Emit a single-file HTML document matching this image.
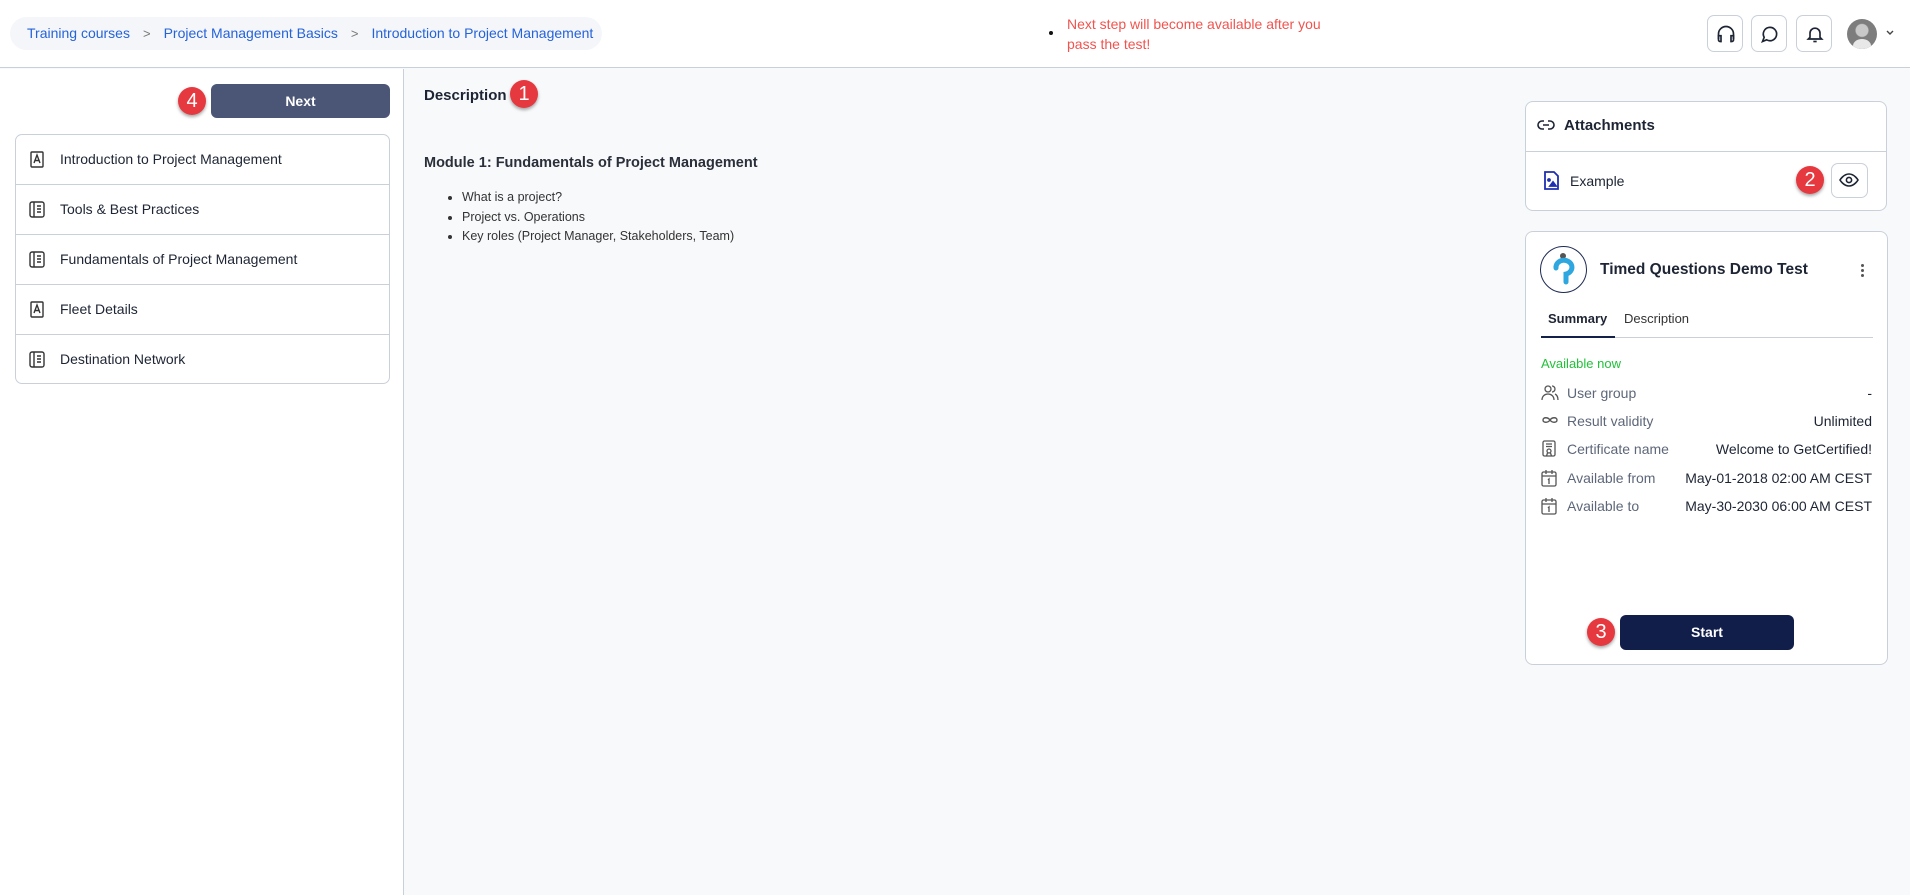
<!DOCTYPE html>
<html><head><meta charset="utf-8"><style>
*{box-sizing:border-box;margin:0;padding:0}
body{width:1910px;height:895px;overflow:hidden;background:#f8f9fb;font-family:"Liberation Sans",sans-serif;color:#1d2433;position:relative}
.abs{position:absolute}
.header{left:0;top:0;width:1910px;height:68px;background:#fff;border-bottom:1px solid #c9d0da}
.crumb{left:10px;top:17px;width:592px;height:33px;background:#f4f6fa;border-radius:17px;font-size:14px;color:#2563d9;line-height:33px;padding-left:17px;white-space:nowrap}
.crumb span.sep{color:#777;margin:0 13px;font-size:13px}
.warn{left:1067px;top:14px;color:#f0544f;font-size:14px;line-height:20px}
.hbtn{top:15px;width:36px;height:37px;border:1px solid #c9d0da;border-radius:7px;background:#fff}
.hbtn svg{position:absolute;left:8px;top:8px}
.side{left:0;top:69px;width:404px;height:826px;background:#fff;border-right:1px solid #c9d0da}
.next{left:211px;top:84px;width:179px;height:34px;background:#4b5575;border-radius:6px;color:#fff;font-weight:bold;font-size:14px;text-align:center;line-height:34px}
.badge{width:28px;height:28px;border-radius:50%;background:#e5393f;color:#fff;font-size:20px;text-align:center;line-height:28px;box-shadow:0 2px 3px rgba(0,0,0,.35)}
.list{left:15px;top:134px;width:375px;height:250px;border:1px solid #c9d0da;border-radius:7px;background:#fff;overflow:hidden}
.row{height:50px;border-bottom:1px solid #c9d0da;position:relative;font-size:14px;line-height:49px;padding-left:44px}
.row:last-child{border-bottom:none}
.row svg{position:absolute;left:13px;top:16px}
.card{border:1px solid #c9d0da;border-radius:8px;background:#fff}
.lab{left:1567px;font-size:14px;color:#5d6779}
.val{right:38px;font-size:14px;color:#1d2433;text-align:right}
.ic{left:1541px}
</style></head><body>
<div class="abs header"></div>
<div class="abs crumb">Training courses<span class="sep">&gt;</span>Project Management Basics<span class="sep">&gt;</span>Introduction to Project Management</div>
<div class="abs" style="left:1049px;top:31px;width:4px;height:4px;border-radius:50%;background:#111"></div>
<div class="abs warn">Next step will become available after you<br>pass the test!</div>
<div class="abs hbtn" style="left:1707px"><svg width="20" height="20" viewBox="0 0 24 24" fill="none" stroke="#1d2433" stroke-width="2"><path d="M3 18v-6a9 9 0 0 1 18 0v6"/><path d="M21 19a2 2 0 0 1-2 2h-1v-7h3zM3 19a2 2 0 0 0 2 2h1v-7H3z"/></svg></div>
<div class="abs hbtn" style="left:1751px"><svg width="20" height="20" viewBox="0 0 24 24" fill="none" stroke="#1d2433" stroke-width="2"><path d="M3 21l2-5a8 8 0 1 1 3 3z"/></svg></div>
<div class="abs hbtn" style="left:1796px"><svg width="20" height="20" viewBox="0 0 24 24" fill="none" stroke="#1d2433" stroke-width="2"><path d="M6 16V11a6 6 0 0 1 12 0v5l2 2H4z"/><path d="M10 21h4"/></svg></div>
<div class="abs" style="left:1847px;top:19px;width:30px;height:30px;border-radius:50%;background:radial-gradient(circle at 50% 38%,#c8c8c8 0 6px,#7d7d7d 7px);overflow:hidden"><div style="position:absolute;left:6px;top:20px;width:18px;height:14px;border-radius:50%;background:#e8e8e8"></div></div>
<svg class="abs" style="left:1885px;top:29px" width="10" height="8" viewBox="0 0 10 8"><path d="M2 2l3 3 3-3" stroke="#444" stroke-width="1.4" fill="none"/></svg>

<div class="abs side"></div>
<div class="abs next">Next</div>
<div class="abs badge" style="left:178px;top:87px">4</div>
<div class="abs list">
<div class="row"><svg width="16" height="18" viewBox="0 0 16 18" fill="none" stroke="#333" stroke-width="1.4"><rect x="2" y="1" width="12" height="15" rx="1"/><path d="M5 12l3-8 3 8M6 9.5h4"/></svg>Introduction to Project Management</div>
<div class="row"><svg width="16" height="18" viewBox="0 0 16 18" fill="none" stroke="#333" stroke-width="1.4"><rect x="1" y="1" width="14" height="15" rx="2"/><path d="M5 1v15M8 5h4M8 8h4M8 11h4"/></svg>Tools &amp; Best Practices</div>
<div class="row"><svg width="16" height="18" viewBox="0 0 16 18" fill="none" stroke="#333" stroke-width="1.4"><rect x="1" y="1" width="14" height="15" rx="2"/><path d="M5 1v15M8 5h4M8 8h4M8 11h4"/></svg>Fundamentals of Project Management</div>
<div class="row"><svg width="16" height="18" viewBox="0 0 16 18" fill="none" stroke="#333" stroke-width="1.4"><rect x="2" y="1" width="12" height="15" rx="1"/><path d="M5 12l3-8 3 8M6 9.5h4"/></svg>Fleet Details</div>
<div class="row"><svg width="16" height="18" viewBox="0 0 16 18" fill="none" stroke="#333" stroke-width="1.4"><rect x="1" y="1" width="14" height="15" rx="2"/><path d="M5 1v15M8 5h4M8 8h4M8 11h4"/></svg>Destination Network</div>
</div>

<div class="abs" style="left:424px;top:87px;font-weight:bold;font-size:15px">Description</div>
<div class="abs badge" style="left:510px;top:80px">1</div>
<div class="abs" style="left:424px;top:155px;font-weight:bold;font-size:14.5px;color:#2a2f3a">Module 1: Fundamentals of Project Management</div>
<ul class="abs" style="left:462px;top:188px;font-size:12.5px;line-height:19.5px;color:#333">
<li>What is a project?</li><li>Project vs. Operations</li><li>Key roles (Project Manager, Stakeholders, Team)</li></ul>

<div class="abs card" style="left:1525px;top:101px;width:362px;height:110px"></div>
<div class="abs" style="left:1525px;top:151px;width:362px;height:1px;background:#c9d0da"></div>
<svg class="abs" style="left:1537px;top:118px" width="18" height="14" viewBox="0 0 18 14" fill="none" stroke="#1d2433" stroke-width="1.6"><path d="M7 3H5a4 4 0 0 0 0 8h2M11 3h2a4 4 0 0 1 0 8h-2M6 7h6"/></svg>
<div class="abs" style="left:1564px;top:117px;font-weight:bold;font-size:15px">Attachments</div>
<svg class="abs" style="left:1543px;top:170px" width="17" height="21" viewBox="0 0 17 21" fill="none" stroke="#1f2fb0" stroke-width="1.8"><path d="M2 2h9l4 4v13H2z"/><circle cx="6" cy="10" r="1" fill="#1f2fb0"/><path d="M7 16l3-4 3 4z" fill="#1f2fb0"/></svg>
<div class="abs" style="left:1570px;top:173px;font-size:14px">Example</div>
<div class="abs badge" style="left:1796px;top:166px">2</div>
<div class="abs" style="left:1831px;top:163px;width:37px;height:35px;border:1px solid #c9d0da;border-radius:7px;background:#fff"></div>
<svg class="abs" style="left:1839px;top:172px" width="20" height="16" viewBox="0 0 20 16" fill="none" stroke="#1d2433" stroke-width="1.6"><path d="M1 8s3.5-6 9-6 9 6 9 6-3.5 6-9 6-9-6-9-6z"/><circle cx="10" cy="8" r="2.6"/></svg>

<div class="abs card" style="left:1525px;top:231px;width:363px;height:434px"></div>
<div class="abs" style="left:1540px;top:246px;width:47px;height:47px;border:1.5px solid #1d2a55;border-radius:50%"></div>
<svg class="abs" style="left:1552px;top:252px" width="24" height="36" viewBox="0 0 24 36"><circle cx="11" cy="4" r="3" fill="#555"/><path d="M4 16a8 7 0 1 1 10 6v8" stroke="#2ea6e0" stroke-width="5" fill="none" stroke-linecap="round"/></svg>
<div class="abs" style="left:1600px;top:261px;font-weight:bold;font-size:15.5px">Timed Questions Demo Test</div>
<div class="abs" style="left:1861px;top:264px;width:3px;height:3px;border-radius:50%;background:#555;box-shadow:0 5px 0 #555,0 10px 0 #555"></div>
<div class="abs" style="left:1548px;top:311px;font-weight:bold;font-size:13px">Summary</div>
<div class="abs" style="left:1624px;top:311px;font-size:13px;color:#333">Description</div>
<div class="abs" style="left:1541px;top:337px;width:332px;height:1px;background:#c9d0da"></div>
<div class="abs" style="left:1541px;top:336px;width:74px;height:2px;background:#12204a"></div>
<div class="abs" style="left:1541px;top:356px;font-size:13px;color:#22c13a">Available now</div>

<svg class="abs ic" style="top:384px" width="18" height="18" viewBox="0 0 18 18" fill="none" stroke="#555" stroke-width="1.3"><circle cx="7" cy="5" r="3"/><path d="M1 16c0-4 3-6 6-6s6 2 6 6M11 2a3 3 0 0 1 0 6M14 10c2 1 3 3 3 6"/></svg>
<div class="abs lab" style="top:385px">User group</div><div class="abs val" style="top:385px">-</div>
<svg class="abs ic" style="top:414px" width="18" height="12" viewBox="0 0 18 12" fill="none" stroke="#555" stroke-width="1.4"><path d="M9 6c-2-3-7-3-7 0s5 3 7 0 7-3 7 0-5 3-7 0z"/></svg>
<div class="abs lab" style="top:413px">Result validity</div><div class="abs val" style="top:413px">Unlimited</div>
<svg class="abs ic" style="top:440px" width="16" height="18" viewBox="0 0 16 18" fill="none" stroke="#555" stroke-width="1.3"><rect x="2" y="1" width="12" height="15" rx="1.5"/><path d="M5 4h6M5 6.5h6"/><circle cx="8" cy="11" r="2"/><path d="M6.5 13l-1 3M9.5 13l1 3"/></svg>
<div class="abs lab" style="top:441px">Certificate name</div><div class="abs val" style="top:441px">Welcome to GetCertified!</div>
<svg class="abs ic" style="top:469px" width="16" height="18" viewBox="0 0 16 18" fill="none" stroke="#555" stroke-width="1.3"><rect x="1" y="3" width="14" height="14" rx="1.5"/><path d="M1 7h14M5 1v4M11 1v4M7 11l1-1v5"/></svg>
<div class="abs lab" style="top:470px">Available from</div><div class="abs val" style="top:470px">May-01-2018 02:00 AM CEST</div>
<svg class="abs ic" style="top:497px" width="16" height="18" viewBox="0 0 16 18" fill="none" stroke="#555" stroke-width="1.3"><rect x="1" y="3" width="14" height="14" rx="1.5"/><path d="M1 7h14M5 1v4M11 1v4M7 11l1-1v5"/></svg>
<div class="abs lab" style="top:498px">Available to</div><div class="abs val" style="top:498px">May-30-2030 06:00 AM CEST</div>

<div class="abs" style="left:1620px;top:615px;width:174px;height:35px;background:#121e4a;border-radius:6px;color:#fff;font-weight:bold;font-size:14px;text-align:center;line-height:35px">Start</div>
<div class="abs badge" style="left:1587px;top:618px">3</div>
</body></html>
